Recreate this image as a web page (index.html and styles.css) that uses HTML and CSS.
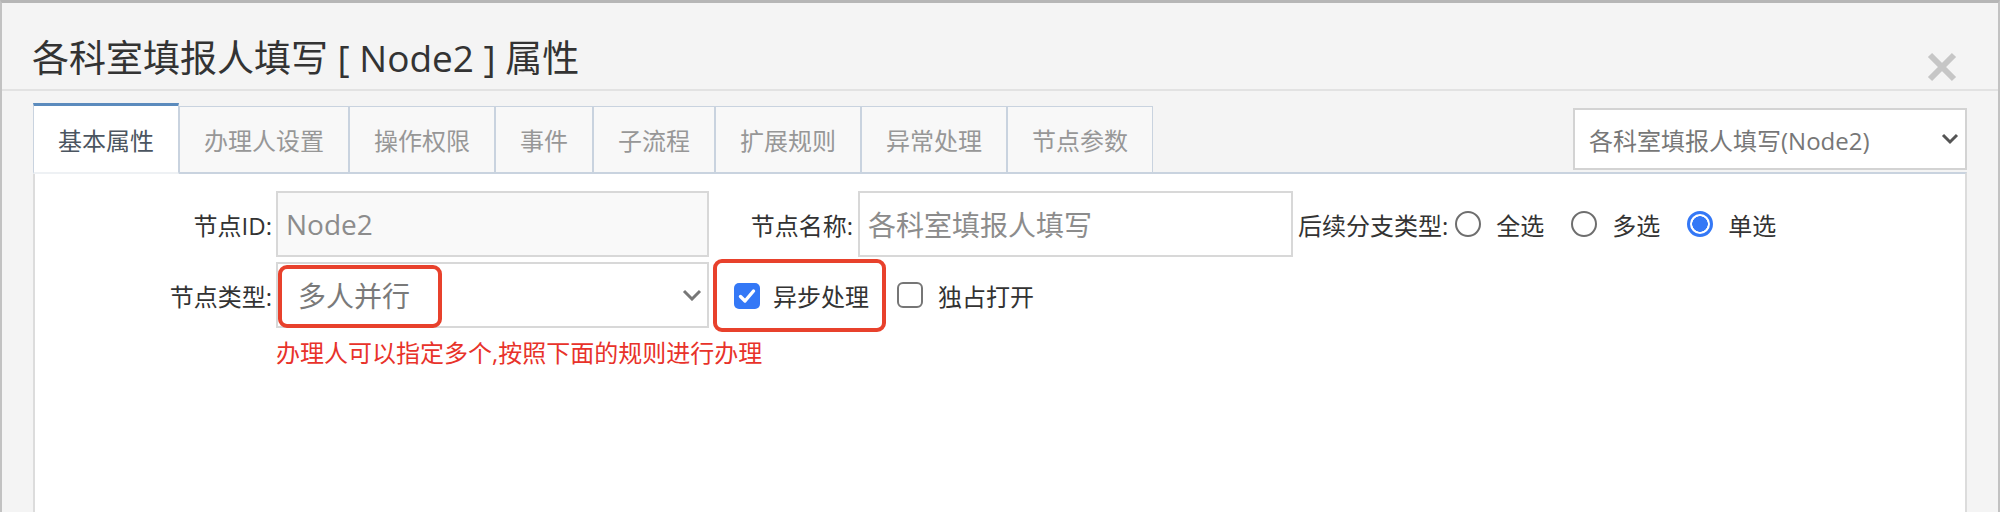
FILE: index.html
```html
<!DOCTYPE html>
<html lang="zh-CN">
<head>
<meta charset="utf-8">
<title>节点属性</title>
<link rel="stylesheet" href="styles.css">
</head>
<body>
<div class="dialog">
  <div class="header">
    <h1 class="title">各科室填报人填写 [ Node2 ] 属性</h1>
    <span class="close"><svg width="32" height="32" viewBox="0 0 32 32"><path d="M4 4 L28 28 M28 4 L4 28" stroke="#c6c6c6" stroke-width="6" fill="none"/></svg></span>
  </div>
  <div class="tabbar">
    <div class="tab active">基本属性</div>
    <div class="tab">办理人设置</div>
    <div class="tab">操作权限</div>
    <div class="tab">事件</div>
    <div class="tab">子流程</div>
    <div class="tab">扩展规则</div>
    <div class="tab">异常处理</div>
    <div class="tab">节点参数</div>
    <div class="node-select">
      <span>各科室填报人填写(Node2)</span>
      <svg class="chev" width="18" height="12" viewBox="0 0 18 12"><path d="M2 2 L9 9 L16 2" stroke="#555" stroke-width="3" fill="none"/></svg>
    </div>
  </div>
  <div class="panel">
    <div class="form">
      <div class="lbl">节点ID:</div>
      <div class="field readonly">Node2</div>
      <div class="lbl lbl2">节点名称:</div>
      <div class="field">各科室填报人填写</div>
      <div class="branch">
        <span class="branch-lbl">后续分支类型:</span>
        <span class="radio"></span><span class="opt">全选</span>
        <span class="radio"></span><span class="opt">多选</span>
        <span class="radio checked"></span><span class="opt">单选</span>
      </div>
      <div class="lbl">节点类型:</div>
      <div class="field select">
        <span>多人并行</span>
        <svg class="chev" width="20" height="12" viewBox="0 0 20 12"><path d="M2 2 L10 10 L18 2" stroke="#777" stroke-width="3" fill="none"/></svg>
        <span class="mark"></span>
      </div>
      <div class="checks">
        <span class="highlight">
          <svg class="cb" width="26" height="26" viewBox="0 0 26 26"><rect x="0" y="0" width="26" height="26" rx="5" fill="#3478f6"/><path d="M6.5 13.5 L11 18 L19.5 8" stroke="#fff" stroke-width="3.4" fill="none" stroke-linecap="round" stroke-linejoin="round"/></svg>
          <span class="opt">异步处理</span>
        </span>
        <svg class="cb cb-off" width="26" height="26" viewBox="0 0 26 26"><rect x="1" y="1" width="24" height="24" rx="5" fill="#fff" stroke="#767676" stroke-width="2"/></svg>
        <span class="opt">独占打开</span>
      </div>
      <div class="hint">办理人可以指定多个,按照下面的规则进行办理</div>
    </div>
  </div>
</div>
</body>
</html>
```
FILE: styles.css
```css
html, body {
  margin: 0;
  padding: 0;
}
body {
  font-family: "Open Sans", "Noto Sans CJK SC", sans-serif;
  color: #333;
}
.dialog {
  width: 2000px;
  height: 512px;
  box-sizing: border-box;
  background: #f4f4f4;
  border-top: 3px solid #b6b6b6;
  border-left: 2px solid #c2c2c2;
  border-right: 2px solid #c2c2c2;
  display: flex;
  flex-direction: column;
  overflow: hidden;
}
.header {
  height: 88px;
  box-sizing: border-box;
  padding: 36px 40px 0 30px;
  border-bottom: 2px solid #e2e2e2;
  display: flex;
  align-items: flex-start;
}
.title {
  margin: 0;
  font-size: 37px;
  line-height: 37px;
  font-weight: normal;
  color: #333;
  flex: 1;
}
.close {
  margin-top: 12px;
  width: 32px;
  height: 32px;
  display: block;
}
.close svg {
  display: block;
}
.tabbar {
  margin-top: 11px;
  height: 70px;
  padding: 0 31px;
  display: flex;
  align-items: flex-end;
}
.tab {
  height: 66px;
  box-sizing: border-box;
  padding: 0 24px;
  border: 1px solid #c9d3df;
  border-bottom: none;
  background: #f8f8f8;
  font-size: 24px;
  color: #979797;
  display: flex;
  align-items: center;
  white-space: nowrap;
}
.tab.active {
  height: 71px;
  margin-bottom: -2px;
  border-top: 3px solid #5b8bbd;
  border-bottom: 2px solid #eef1f4;
  background: #fff;
  color: #4b5560;
  position: relative;
  z-index: 1;
}
.node-select {
  margin-left: auto;
  align-self: flex-start;
  margin-top: 6px;
  width: 394px;
  height: 62px;
  box-sizing: border-box;
  border: 2px solid #d3d3d3;
  background: #fff;
  padding: 0 6px 0 14px;
  display: flex;
  align-items: center;
  justify-content: space-between;
  font-size: 24px;
  color: #777;
}
.chev {
  display: block;
}
.panel {
  flex: 1;
  margin: 0 31px;
  background: #fff;
  border: 2px solid #dcdcdc;
  border-top-color: #c9d3df;
  border-bottom: none;
  padding-top: 17px;
}
.form {
  display: grid;
  grid-template-columns: 241px 433px 149px 435px 1fr;
  grid-template-rows: 66px 66px 40px;
  row-gap: 5px;
}
.lbl {
  font-size: 24px;
  color: #333;
  text-align: right;
  padding-right: 4px;
  display: flex;
  align-items: center;
  justify-content: flex-end;
  white-space: nowrap;
}
.lbl2 {
  padding-right: 5px;
}
.field {
  box-sizing: border-box;
  border: 2px solid #d8d8d8;
  background: #fff;
  font-size: 28px;
  color: #8c8c8c;
  padding-left: 8px;
  display: flex;
  align-items: center;
  white-space: nowrap;
}
.field.readonly {
  background: #f9f9f9;
}
.field.select {
  position: relative;
  padding-left: 20px;
  padding-right: 5px;
  justify-content: space-between;
  color: #7a7a7a;
}
.mark {
  position: absolute;
  left: 0;
  top: 1px;
  width: 164px;
  height: 63px;
  box-sizing: border-box;
  border: 4px solid #e8412c;
  border-radius: 9px;
}
.branch {
  display: flex;
  align-items: center;
  padding-left: 5px;
  font-size: 24px;
  white-space: nowrap;
}
.branch-lbl {
  margin-right: 7px;
}
.radio {
  width: 26px;
  height: 26px;
  box-sizing: border-box;
  border-radius: 50%;
  border: 2px solid #6e6e6e;
  background: #fff;
  margin-right: 15px;
  flex: none;
}
.radio.checked {
  border: 3px solid #3478f6;
  background: radial-gradient(circle, #3478f6 0 7.5px, #fff 8px);
}
.opt {
  font-size: 24px;
  color: #333;
  margin-right: 27px;
}
.checks {
  grid-column: 3 / 6;
  display: flex;
  align-items: center;
  padding-left: 4px;
  white-space: nowrap;
}
.highlight {
  display: flex;
  align-items: center;
  height: 73px;
  margin: -3px 0 -4px;
  box-sizing: border-box;
  border: 4px solid #e8412c;
  border-radius: 9px;
  padding: 0 13px 0 17px;
}
.highlight .opt {
  margin-left: 13px;
  margin-right: 0;
}
.cb {
  display: block;
  flex: none;
}
.cb-off {
  margin-left: 11px;
  margin-right: 15px;
}
.hint {
  grid-column: 2 / 6;
  font-size: 24px;
  line-height: 40px;
  color: #e8322a;
  white-space: nowrap;
}
```
